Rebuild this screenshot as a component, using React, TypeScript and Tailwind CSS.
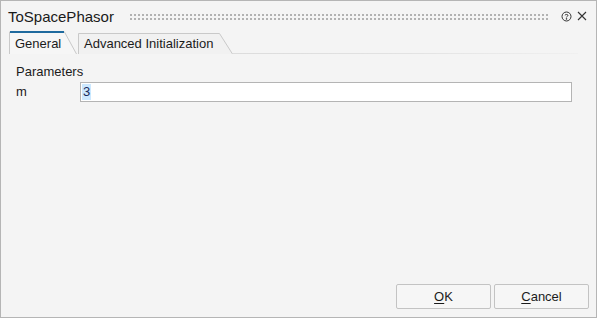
import React from 'react';

const font = { fontFamily: '"Liberation Sans", Arial, sans-serif' };

const TitleDots: React.FC = () => (
    <svg className="flex-1 h-[10px] ml-[16px] mr-[12px]" shapeRendering="crispEdges">
        <defs>
            <pattern id="grip" x="0" y="0" width="4" height="10" patternUnits="userSpaceOnUse">
                <rect x="0" y="3" width="2" height="2" fill="#b2b2b2" />
                <rect x="0" y="7" width="2" height="2" fill="#b2b2b2" />
            </pattern>
        </defs>
        <rect x="0" y="0" width="100%" height="10" fill="url(#grip)" />
    </svg>
);

const HelpIcon: React.FC = () => (
    <svg width="11" height="11" viewBox="0 0 11 11" fill="none" stroke="#333" strokeWidth="1">
        <circle cx="5.5" cy="5.5" r="4.5" />
        <path d="M4 4.3 C4 3.2 7 3.2 7 4.4 C7 5.3 5.5 5.3 5.5 6.4" />
        <circle cx="5.5" cy="7.9" r="0.4" fill="#333" />
    </svg>
);

const CloseIcon: React.FC = () => (
    <svg width="10" height="10" viewBox="0 0 10 10" stroke="#333" strokeWidth="1.1">
        <path d="M1 1 L9 9 M9 1 L1 9" />
    </svg>
);

export default function App() {
    return (
        <div
            className="w-[597px] h-[318px] border border-[#b5b5b5] bg-[#f4f4f4] flex flex-col text-[#1b1b1b]"
            style={font}
        >
            {/* title bar */}
            <div className="h-[30px] flex items-center pl-[7px] pr-[9px]">
                <span className="text-[15px] leading-none text-[#1a1a1a] pt-[1px]">ToSpacePhasor</span>
                <TitleDots />
                <div className="flex items-center gap-[5px]">
                    <HelpIcon />
                    <CloseIcon />
                </div>
            </div>

            {/* tabs */}
            <div className="flex items-end pl-[8px] pr-[18px]">
                <div className="relative w-[68px] h-[23px] flex items-center pl-[6px] text-[13px]">
                    <svg className="absolute inset-0" width="68" height="23" fill="none">
                        <path d="M0.5 23 V1 H55.5 L67.5 23" stroke="#c9c9c9" fill="#f6f6f6" />
                        <rect x="1" y="0" width="54" height="2" fill="#1f6a9e" />
                    </svg>
                    <span className="relative pt-[2px]">General</span>
                </div>
                <div className="relative w-[155px] h-[21px] flex items-center pl-[6px] text-[13px] ml-[1px]">
                    <svg className="absolute inset-0" width="155" height="21" fill="none">
                        <path d="M0.5 21 V0.5 H141.5 L154.5 21" stroke="#c9c9c9" fill="#f1f1f1" />
                    </svg>
                    <span className="relative">Advanced Initialization</span>
                </div>
                <div className="flex-1 h-px bg-gradient-to-r from-[#dcdcdc] via-[#e2e2e2] to-[#f0f0f0]" />
            </div>

            {/* content */}
            <div className="flex-1 flex flex-col px-[15px] pt-[9px] text-[13px]">
                <div className="h-[18px] leading-[18px]">Parameters</div>
                <div className="flex items-center mt-[1px]">
                    <span className="w-[64px]">m</span>
                    <div className="w-[492px] h-[20px] border border-[#b4b4b4] bg-white flex items-center pl-[1px]">
                        <span className="bg-[#cce8ff] px-[1px] leading-[16px] text-[#1a2a5a]">3</span>
                    </div>
                </div>
            </div>

            {/* buttons */}
            <div className="flex justify-end gap-[3px] pr-[7px] pb-[8px]">
                <button className="w-[95px] h-[25px] border border-[#c3c3c3] rounded-[2px] bg-[#f6f6f6] text-[13px]">
                    <span className="underline underline-offset-2">O</span>K
                </button>
                <button className="w-[95px] h-[25px] border border-[#c3c3c3] rounded-[2px] bg-[#f6f6f6] text-[13px]">
                    <span className="underline underline-offset-2">C</span>ancel
                </button>
            </div>
        </div>
    );
}
